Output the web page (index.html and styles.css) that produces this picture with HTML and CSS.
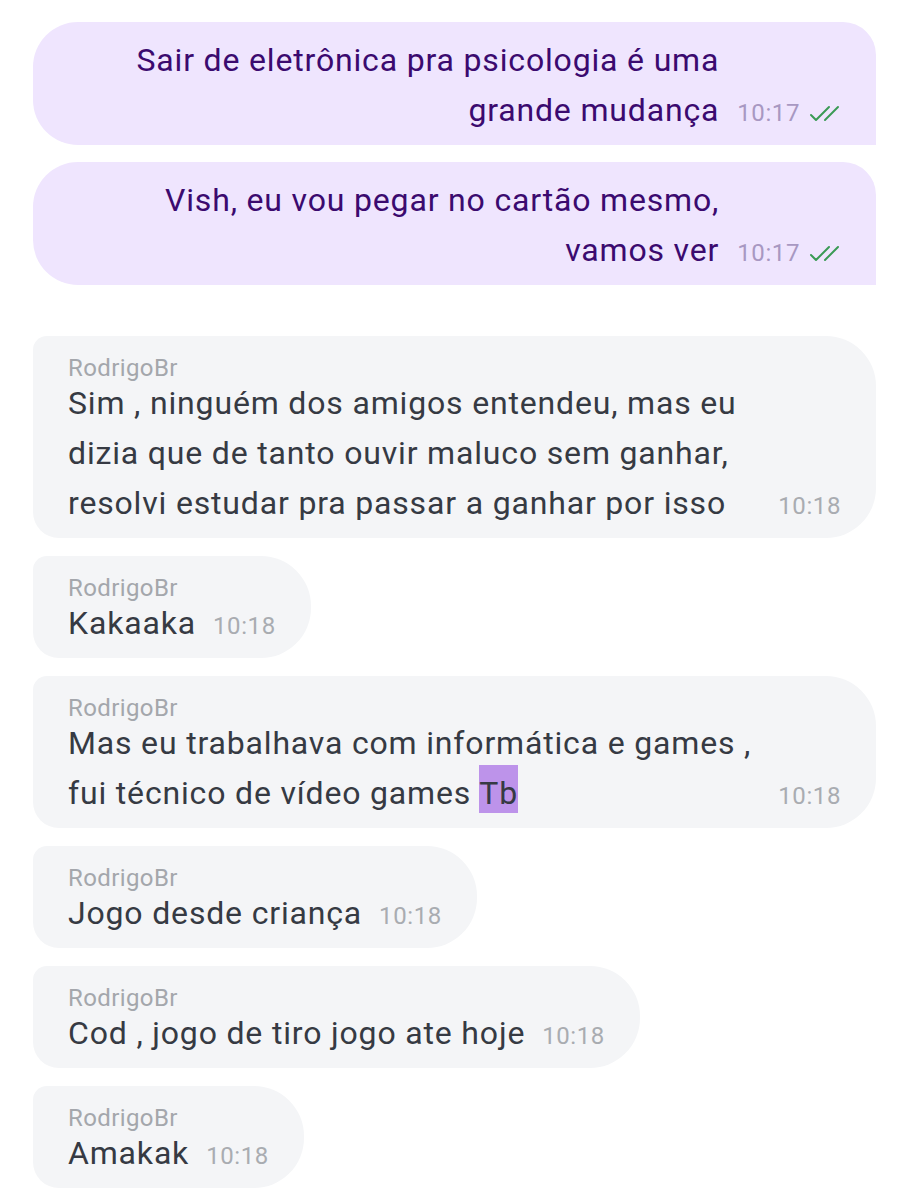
FILE: index.html
```html
<!DOCTYPE html>
<html>
<head>
<meta charset="utf-8">
<link rel="stylesheet" href="styles.css">
</head>
<body>
<div class="chat">
  <div class="bubble out">
    <div class="text">Sair de eletrônica pra psicologia é uma<br>grande mudança</div>
    <div class="meta"><span class="time">10:17</span><svg class="ticks" width="32" height="18" viewBox="0 0 32 18"><path d="M2 10 L7 15 L20 2" fill="none" stroke="#3a9a55" stroke-width="2" stroke-linecap="round" stroke-linejoin="round"/><path d="M16 15 L29 2" fill="none" stroke="#3a9a55" stroke-width="2" stroke-linecap="round"/></svg></div>
  </div>
  <div class="bubble out">
    <div class="text">Vish, eu vou pegar no cartão mesmo,<br>vamos ver</div>
    <div class="meta"><span class="time">10:17</span><svg class="ticks" width="32" height="18" viewBox="0 0 32 18"><path d="M2 10 L7 15 L20 2" fill="none" stroke="#3a9a55" stroke-width="2" stroke-linecap="round" stroke-linejoin="round"/><path d="M16 15 L29 2" fill="none" stroke="#3a9a55" stroke-width="2" stroke-linecap="round"/></svg></div>
  </div>

  <div class="bubble in wide first-in">
    <div class="name">RodrigoBr</div>
    <div class="row">
      <div class="text">Sim , ninguém dos amigos entendeu, mas eu<br>dizia que de tanto ouvir maluco sem ganhar,<br>resolvi estudar pra passar a ganhar por isso</div>
      <span class="time">10:18</span>
    </div>
  </div>
  <div class="bubble in">
    <div class="name">RodrigoBr</div>
    <div class="row">
      <div class="text">Kakaaka</div>
      <span class="time">10:18</span>
    </div>
  </div>
  <div class="bubble in wide">
    <div class="name">RodrigoBr</div>
    <div class="row">
      <div class="text">Mas eu trabalhava com informática e games ,<br>fui técnico de vídeo games <span class="hl">Tb</span></div>
      <span class="time">10:18</span>
    </div>
  </div>
  <div class="bubble in">
    <div class="name">RodrigoBr</div>
    <div class="row">
      <div class="text">Jogo desde criança</div>
      <span class="time">10:18</span>
    </div>
  </div>
  <div class="bubble in">
    <div class="name">RodrigoBr</div>
    <div class="row">
      <div class="text">Cod , jogo de tiro jogo ate hoje</div>
      <span class="time">10:18</span>
    </div>
  </div>
  <div class="bubble in">
    <div class="name">RodrigoBr</div>
    <div class="row">
      <div class="text">Amakak</div>
      <span class="time">10:18</span>
    </div>
  </div>
</div>
</body>
</html>
```

FILE: styles.css
```css
* { box-sizing: border-box; }
html, body { margin: 0; padding: 0; background: #ffffff; }
body {
  font-family: Roboto, "Noto Sans", "Liberation Sans", sans-serif;
  width: 909px;
  height: 1200px;
  overflow: hidden;
}
.chat {
  display: flex;
  flex-direction: column;
  align-items: flex-start;
  padding: 22px 33px 0 33px;
  gap: 18px;
}
.bubble { flex: none; }
.text {
  font-size: 32px;
  line-height: 50px;
  letter-spacing: 0.83px;
  white-space: nowrap;
}
.time {
  font-size: 24px;
  line-height: 30px;
  letter-spacing: 0.6px;
}

/* outgoing */
.out {
  width: 843px;
  background: #efe5fe;
  border-radius: 45px 33px 0 45px;
  padding: 13px 35px 10px 36px;
  display: flex;
  justify-content: flex-end;
  align-items: flex-end;
}
.out + .out { margin-top: -1px; }
.out .text {
  color: #3b0a6f;
  text-align: right;
}
.out .meta {
  display: flex;
  align-items: center;
  margin-left: 18px;
  margin-bottom: 7px;
  gap: 9px;
}
.out .time { color: #a898c2; }
.ticks { display: block; margin-top: 2px; }

/* incoming */
.in {
  background: #f4f5f7;
  border-radius: 14px 50px 50px 26px;
  padding: 20px 35px 10px 35px;
  display: flex;
  flex-direction: column;
}
.first-in { margin-top: 33px; }
.in.wide { width: 843px; }
.name {
  font-size: 24px;
  line-height: 24px;
  letter-spacing: 0.4px;
  color: #a4a7ac;
  margin-bottom: -2px;
}
.row {
  display: flex;
  align-items: flex-end;
}
.in .text { color: #363a43; }
.in .time {
  color: #a9acb1;
  margin-left: 17px;
  margin-bottom: 7px;
}
.in.wide .time { margin-left: auto; }
.hl {
  background: #bd93ea;
  padding-top: 9px;
  padding-bottom: 1px;
}
```
